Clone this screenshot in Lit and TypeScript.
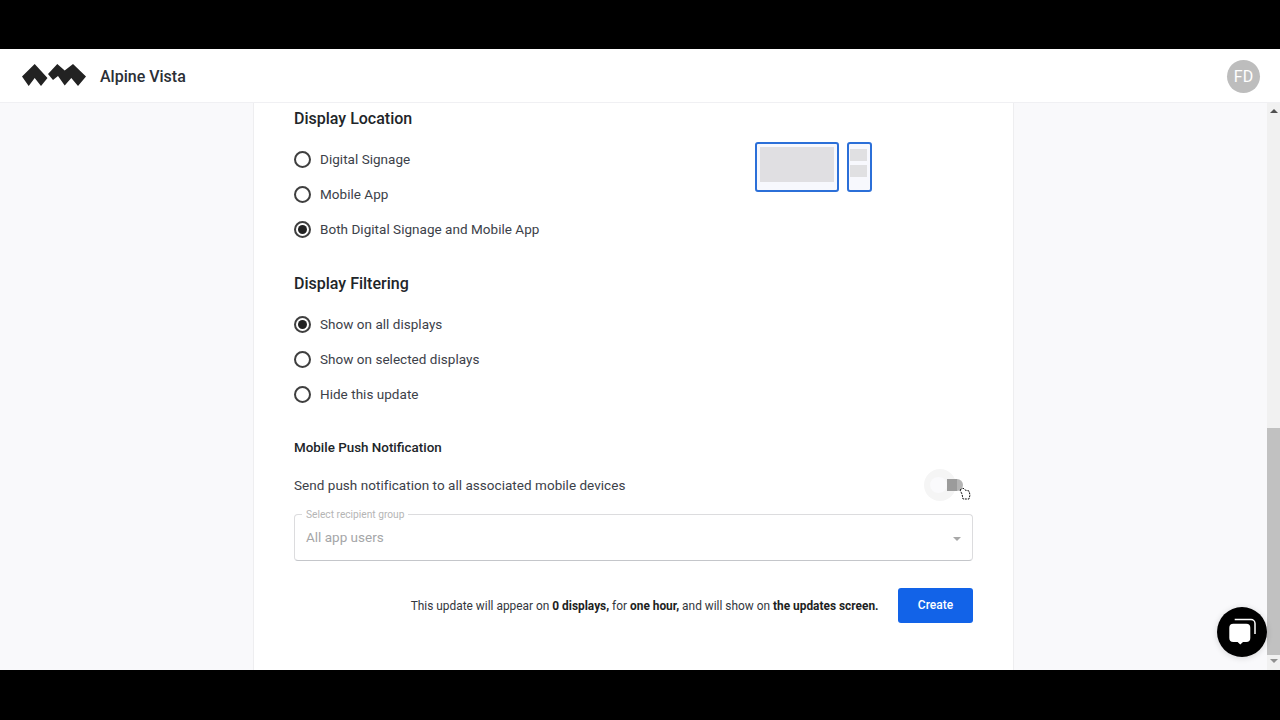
import { LitElement, html, css } from "lit";
import { customElement } from "lit/decorators.js";

@customElement("app-root")
export class AppRoot extends LitElement {
  static styles = css`
    :host { display: block; width: 1280px; height: 720px; overflow: hidden; font-family: Roboto, "Liberation Sans", sans-serif; color: #212529; background: #000; position: relative; }
    .app { display: flex; flex-direction: column; height: 720px; }
    .band { height: 49px; flex: none; background: #000; }
    .band.bottom { height: 50px; }
    .header { height: 54px; flex: none; box-sizing: border-box; background: #fff; border-bottom: 1px solid #f0f0f3; display: flex; align-items: center; padding: 1px 20px 0 22px; }
    .logo { width: 64px; height: 22px; display: block; margin: -3px 14px 0 0; }
    .brand { font-size: 16px; font-weight: 500; color: #2b2f36; flex: 1; }
    .avatar { width: 33px; height: 33px; border-radius: 50%; background: #bdbdbd; color: #fff; font-size: 16px; display: flex; align-items: center; justify-content: center; }
    .body { flex: 1; min-height: 0; display: flex; background: #f9f9fb; }
    .canvas { flex: 1; display: flex; justify-content: flex-start; padding-left: 253px; min-width: 0; }
    .panel { width: 761px; box-sizing: border-box; background: #fff; border-left: 1px solid #eeeef0; border-right: 1px solid #eeeef0; padding: 4px 40px 0; }
    h2 { margin: 0; font-size: 16px; font-weight: 500; line-height: 24px; color: #212529; }
    h3 { margin: 0; font-size: 13.4px; font-weight: 500; line-height: 20px; color: #212529; }
    .loc { display: flex; }
    .radios { display: flex; flex-direction: column; gap: 11px; margin-top: 16px; }
    .loc .radios { width: 461px; flex: none; }
    .radio { display: flex; align-items: center; height: 24px; font-size: 13.5px; letter-spacing: 0.03px; color: #3c4149; }
    .ring { box-sizing: border-box; width: 17px; height: 17px; border: 2px solid #3f3f3f; border-radius: 50%; margin: 0 9px 0 0; background: #fff; display: flex; align-items: center; justify-content: center; flex: none; }
    .ring.on::after { content: ""; width: 9px; height: 9px; border-radius: 50%; background: #222; }
    .preview { display: flex; gap: 8px; margin-top: 11px; height: 50px; }
    .screen { box-sizing: border-box; height: 50px; border: 2px solid #2b6fd8; border-radius: 3px; background: #f7f8fd; display: flex; flex-direction: column; gap: 4px; }
    .wide { width: 84px; padding: 3px; }
    .wide i { display: block; height: 35px; background: #e0dfe2; }
    .tall { width: 25px; padding: 5px 3px 0 1px; }
    .tall i { display: block; height: 12px; background: #e0e0e2; }
    .filter { margin-top: 31px; }
    .push { margin-top: 32px; }
    .send { display: flex; align-items: center; justify-content: space-between; height: 24px; margin-top: 15px; font-size: 13.5px; letter-spacing: 0.035px; color: #3c4149; }
    .toggle { position: relative; width: 34px; height: 14px; margin-right: 6px; flex: none; }
    .halo { position: absolute; left: -9px; top: -9px; width: 32px; height: 32px; border-radius: 50%; background: #f5f5f5; }
    .track { position: absolute; left: 14px; top: 1px; width: 16px; height: 12px; border-radius: 0 6px 6px 0; background: linear-gradient(90deg, #9b9b9b 62%, #b4b4b4 62%); }
    .thumb { position: absolute; left: -3px; top: -1px; width: 17px; height: 16px; border-radius: 50%; background: #fafafc; }
    .cursor { position: absolute; left: 26px; top: 8px; width: 12px; height: 14px; }
    .select { position: relative; box-sizing: border-box; height: 47px; margin-top: 17px; border: 1px solid #dcdcde; border-bottom-color: #c4c6ca; border-radius: 4px; display: flex; align-items: center; justify-content: space-between; padding: 0 11px 1px; font-size: 13.5px; color: #a5a6a8; }
    .legend { position: absolute; left: 7px; top: -6px; padding: 0 4px; background: #fff; font-size: 10.2px; line-height: 12px; color: #b5b5b5; }
    .caret { width: 0; height: 0; border-left: 4.5px solid transparent; border-right: 4.5px solid transparent; border-top: 4.5px solid #a8a8a8; margin: 3px 0 0 0; }
    .foot { display: flex; justify-content: flex-end; align-items: center; gap: 19.5px; margin-top: 27px; font-size: 11.9px; color: #33373d; }
    .foot b { font-weight: 700; color: #1d1f23; }
    .create { width: 75px; height: 35px; border: 0; border-radius: 3px; background: #1263e8; color: #fff; font: 500 12px Roboto, "Liberation Sans", sans-serif; display: flex; align-items: center; justify-content: center; padding: 0 0 2px; }
    .scroll { width: 13px; flex: none; background: #f1f1f1; display: flex; flex-direction: column; align-items: center; }
    .up { width: 0; height: 0; margin-top: 6px; border-left: 4px solid transparent; border-right: 4px solid transparent; border-bottom: 4px solid #505050; }
    .thumbbar { width: 13px; height: 227px; margin-top: 315px; background: #c1c1c1; }
    .down { width: 0; height: 0; margin-top: 4px; border-left: 4px solid transparent; border-right: 4px solid transparent; border-top: 4px solid #909090; }
    .chat { position: absolute; left: 1217px; top: 607px; width: 50px; height: 50px; border-radius: 50%; background: #000; display: flex; align-items: center; justify-content: center; box-shadow: 0 1px 6px rgba(0,0,0,.15); }
    .chat svg { width: 28px; height: 28px; display: block; }
  `;

  private radio(label: string, on = false) {
    return html`<div class="radio"><span class="ring ${on ? "on" : ""}"></span>${label}</div>`;
  }

  render() {
    return html`
      <div class="app">
        <div class="band"></div>
        <header class="header">
          <svg class="logo" viewBox="0 0 64 22">
            <path fill="#222" d="M0 12.5 L12.7 0 L25.5 14 L19 22 L12.7 14 L6.7 22 Z" />
            <path fill="#222" d="M26 10 L35.3 0 L42.7 6.5 L51 0 L64 12.5 L56 22 L49.3 14 L42.7 21.5 L36 12 L31 16 Z" />
          </svg>
          <div class="brand">Alpine Vista</div>
          <div class="avatar">FD</div>
        </header>
        <div class="body">
          <div class="canvas">
            <main class="panel">
              <h2>Display Location</h2>
              <div class="loc">
                <div class="radios">
                  ${this.radio("Digital Signage")}
                  ${this.radio("Mobile App")}
                  ${this.radio("Both Digital Signage and Mobile App", true)}
                </div>
                <div class="preview">
                  <div class="screen wide"><i></i></div>
                  <div class="screen tall"><i></i><i></i></div>
                </div>
              </div>
              <h2 class="filter">Display Filtering</h2>
              <div class="radios">
                ${this.radio("Show on all displays", true)}
                ${this.radio("Show on selected displays")}
                ${this.radio("Hide this update")}
              </div>
              <h3 class="push">Mobile Push Notification</h3>
              <div class="send">
                <span>Send push notification to all associated mobile devices</span>
                <span class="toggle">
                  <span class="halo"></span><span class="track"></span><span class="thumb"></span>
                  <svg class="cursor" viewBox="0 0 12 14"><path fill="#fff" stroke="#111" stroke-width="1" stroke-dasharray="2 1" d="M1 4 L4 2 L6 4 L10 5 L11 9 L10 13 L4 13 L3 8 Z"/></svg>
                </span>
              </div>
              <div class="select">
                <span class="legend">Select recipient group</span>
                <span>All app users</span>
                <span class="caret"></span>
              </div>
              <div class="foot">
                <span>This update will appear on <b>0 displays,</b> for <b>one hour,</b> and will show on <b>the updates screen.</b></span>
                <button class="create">Create</button>
              </div>
            </main>
          </div>
          <div class="scroll">
            <span class="up"></span>
            <span class="thumbbar"></span>
            <span class="down"></span>
          </div>
        </div>
        <div class="band bottom"></div>
      </div>
      <div class="chat">
        <svg viewBox="0 0 28 28">
          <path fill="none" stroke="#fff" stroke-width="1.5" d="M6.7 1.5 H23 a4 4 0 0 1 4 4 V16" />
          <path fill="#fff" d="M5.3 5.7 H18.3 a4 4 0 0 1 4 4 V20 a4 4 0 0 1 -4 4 H15 L12.3 26.5 L9.6 24 H5.3 a4 4 0 0 1 -4 -4 V9.7 a4 4 0 0 1 4 -4 Z" />
        </svg>
      </div>
    `;
  }
}
